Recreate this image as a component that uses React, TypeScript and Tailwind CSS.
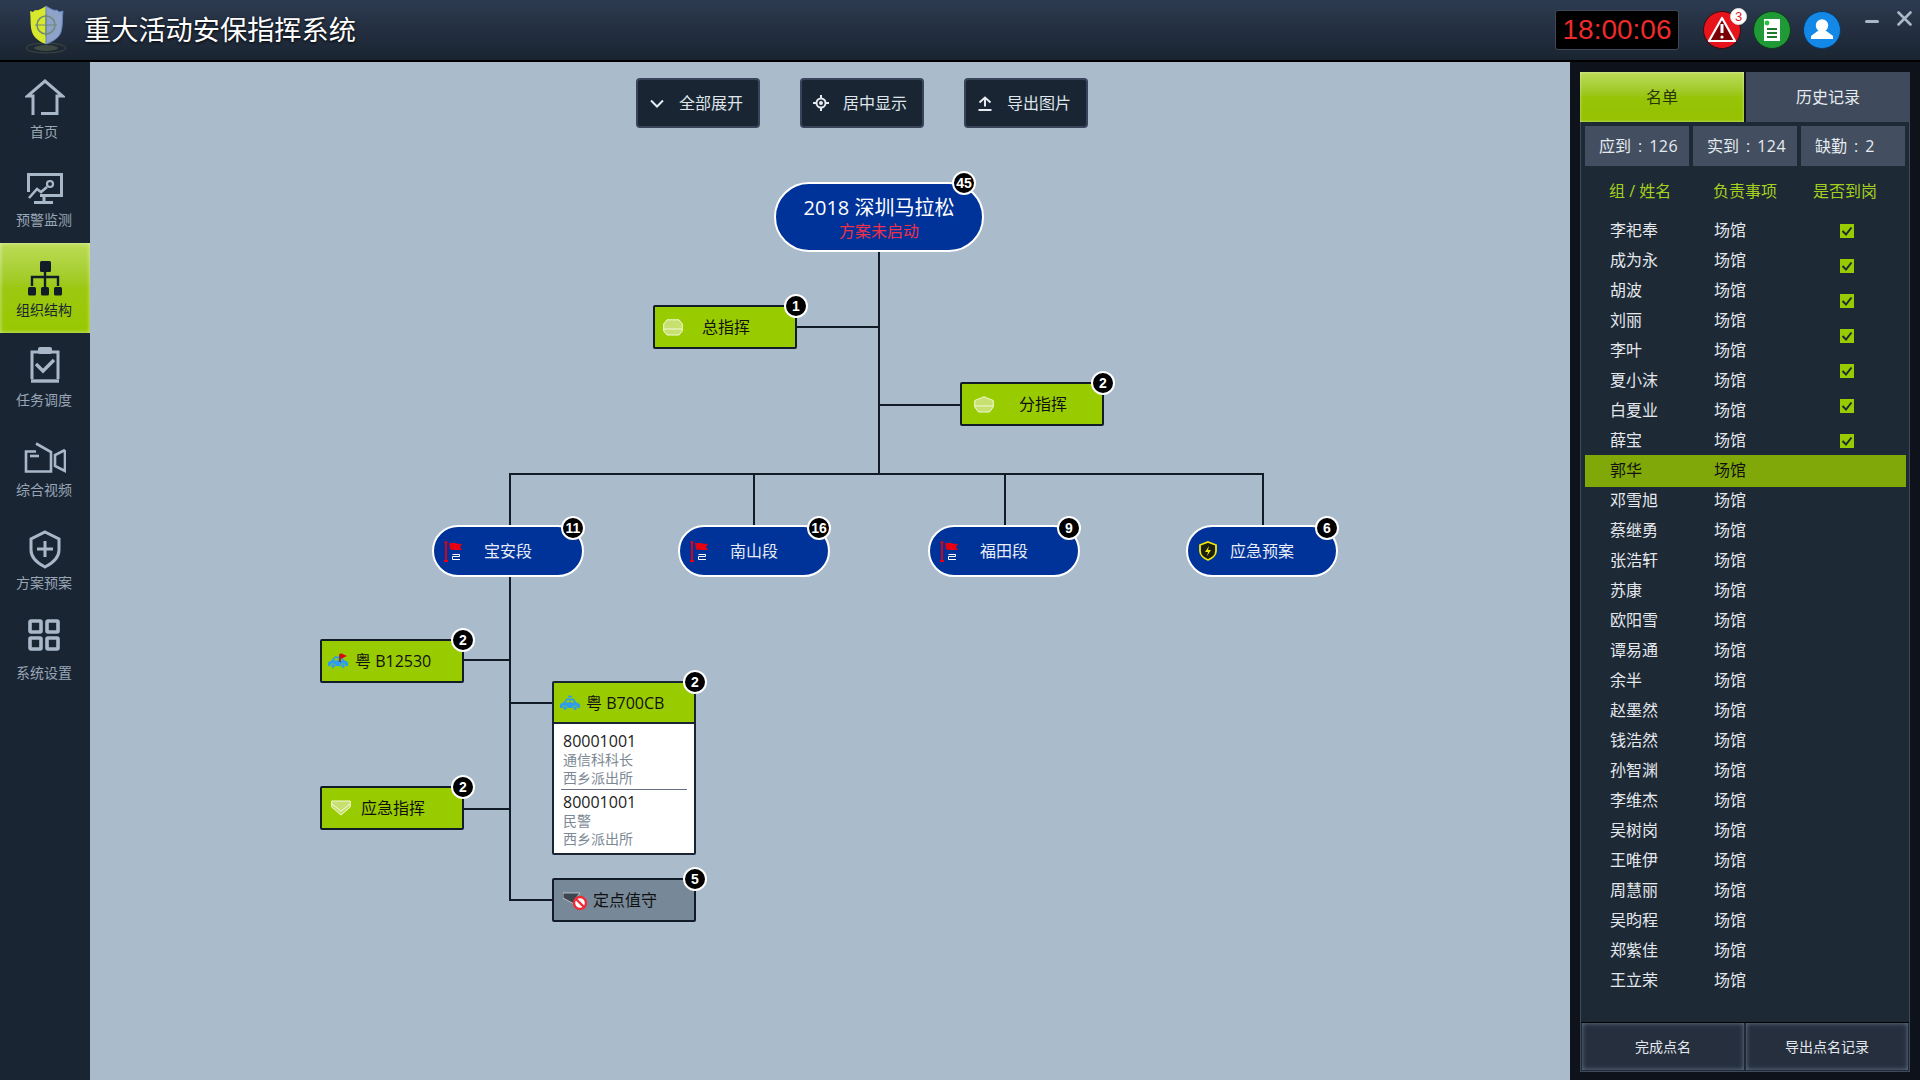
import type { ReactNode } from "react";

const NAMES = [
  "李祀奉", "成为永", "胡波", "刘丽", "李叶", "夏小沫", "白夏业", "薛宝", "郭华", "邓雪旭",
  "蔡继勇", "张浩轩", "苏康", "欧阳雪", "谭易通", "余半", "赵墨然", "钱浩然", "孙智渊", "李维杰",
  "吴树岗", "王唯伊", "周慧丽", "吴昀程", "郑紫佳", "王立荣",
];

function Logo() {
  return (
    <svg width="46" height="50" viewBox="0 0 46 50" className="ml-[25px] shrink-0">
      <ellipse cx="21" cy="43" rx="20" ry="5" fill="none" stroke="#3d4a3c" strokeWidth="1" />
      <ellipse cx="21" cy="43" rx="12" ry="3" fill="#3f4a42" />
      <path d="M21 1 C16 4 13 6 10 5 L8 7 L5 6 C6 14 5 20 7 27 C9 33 15 37 21 39 Z" fill="#d8e82c" />
      <path d="M21 1 C26 4 29 6 32 5 L34 7 L38 6 C37 14 38 20 36 27 C34 33 27 37 21 39 Z" fill="#8fa3c9" stroke="#5f7fc0" strokeWidth="1" />
      <circle cx="21" cy="20" r="9" fill="none" stroke="#6f8a7a" strokeWidth="1.5" />
      <path d="M10 20 H32 M21 9 V31" stroke="#6f8a7a" strokeWidth="1.2" />
    </svg>
  );
}

function Header() {
  return (
    <header className="flex h-[62px] shrink-0 items-center border-b-2 border-black bg-gradient-to-b from-[#2d3b51] to-[#1a2431]">
      <Logo />
      <h1 className="ml-[13px] text-[27.2px] leading-none text-white [text-shadow:0_1px_3px_#000]">重大活动安保指挥系统</h1>
      <div className="flex-1" />
      <div className="flex h-[40px] w-[124px] items-center justify-center rounded-[3px] border border-[#3d4859] bg-black font-['Liberation_Sans',sans-serif] text-[28px] text-[#ee2b2b]">
        18:00:06
      </div>
      <div className="ml-[24px] flex items-center gap-[12px]">
        <div className="relative h-[38px] w-[38px]">
          <svg viewBox="0 0 38 38" className="h-full w-full">
            <circle cx="19" cy="19" r="18.5" fill="#e8141c" stroke="#3a0d10" strokeWidth="1" />
            <path d="M19 7 L32 30 H6 Z" fill="#7a0008" stroke="#fff" strokeWidth="2.2" strokeLinejoin="round" />
            <path d="M19 13 V22" stroke="#fff" strokeWidth="3" />
            <circle cx="19" cy="26" r="1.6" fill="#fff" />
          </svg>
          <span className="absolute -top-[3px] left-[27px] flex h-[17px] w-[17px] items-center justify-center rounded-full border border-[#ddd] bg-white font-['Liberation_Sans',sans-serif] text-[13px] leading-none text-[#e8141c]">
            3
          </span>
        </div>
        <svg viewBox="0 0 38 38" className="h-[38px] w-[38px]">
          <circle cx="19" cy="19" r="18.5" fill="#1f9a36" stroke="#0c3d18" strokeWidth="1" />
          <path d="M11 8 H27 V30 H11 Z" fill="#fff" />
          <circle cx="14" cy="12" r="2.4" fill="#22c63e" />
          <path d="M14 18 H24 M14 22 H24 M14 26 H24" stroke="#1b7a2e" strokeWidth="2" />
        </svg>
        <svg viewBox="0 0 38 38" className="h-[38px] w-[38px]">
          <circle cx="19" cy="19" r="18.5" fill="#1488e6" stroke="#0b3a66" strokeWidth="1" />
          <circle cx="19" cy="14.5" r="6.2" fill="#fff" />
          <path d="M16 19 L8 25 V28 H30 V25 L22 19 Z" fill="#fff" />
        </svg>
      </div>
      <div className="ml-[24px] mb-[18px] h-[3px] w-[14px] rounded-full bg-[#a9b8c9]" />
      <svg viewBox="0 0 15 15" className="ml-[18px] mr-[8px] mb-[24px] h-[15px] w-[15px]" stroke="#a9b8c9" strokeWidth="2.6" strokeLinecap="round">
        <path d="M1.5 1.5 L13.5 13.5 M13.5 1.5 L1.5 13.5" />
      </svg>
    </header>
  );
}

function NavItem(props: { label: string; icon: ReactNode; className: string; labelClass: string; active?: boolean }) {
  return (
    <div
      className={
        props.active
          ? `flex h-[90px] flex-col items-center bg-gradient-to-b from-[#bcdc55] via-[#9cc810] to-[#98c800] text-[#1a2533] shadow-[inset_0_0_4px_rgba(255,255,255,0.6)] ${props.className}`
          : `flex h-[90px] flex-col items-center text-[#98a6b6] ${props.className}`
      }
    >
      {props.icon}
      <span className={`mr-[2px] h-[20px] text-[14px] leading-[20px] ${props.labelClass}`}>{props.label}</span>
    </div>
  );
}

function Sidebar() {
  const s = { fill: "none", stroke: "#a9b8c9", strokeWidth: 3 };
  return (
    <nav className="w-[90px] shrink-0 bg-[#1a2533] pt-px">
      <NavItem
        label="首页"
        className="pt-[16px]"
        labelClass="mt-[7px]"
        icon={
          <svg width="40" height="36" viewBox="0 0 40 36" {...s}>
            <path d="M8 36 V17 H2.5 L20 2 L37.5 17 H32 V34.5 H16" />
          </svg>
        }
      />
      <NavItem
        label="预警监测"
        className="pt-[20px]"
        labelClass="mt-[6px]"
        icon={
          <svg width="36" height="31" viewBox="0 0 36 31" {...s}>
            <path d="M1.5 19 V1.5 H34.5 V22.5 H13" />
            <path d="M2 25 L10 16 L14 19 L20 14" strokeWidth="2.6" />
            <circle cx="23" cy="11" r="3" strokeWidth="2.2" />
            <path d="M17 22 V29.5 M7 29.5 H26" />
          </svg>
        }
      />
      <NavItem
        active
        label="组织结构"
        className="pt-[18px]"
        labelClass="mt-[4px]"
        icon={
          <svg width="34" height="35" viewBox="0 0 34 35" fill="#111c28">
            <rect x="12" y="0" width="11" height="11" rx="1.5" />
            <rect x="0" y="26" width="8" height="8.5" rx="1.5" />
            <rect x="13" y="26" width="8" height="8.5" rx="1.5" />
            <rect x="26" y="26" width="8" height="8.5" rx="1.5" />
            <path d="M17 11 V26 M4 25 V16 H30 V25" fill="none" stroke="#111c28" strokeWidth="2.4" />
          </svg>
        }
      />
      <NavItem
        label="任务调度"
        className="pt-[13px]"
        labelClass="mt-[7px]"
        icon={
          <svg width="30" height="37" viewBox="0 0 30 37" {...s}>
            <path d="M28 33 V6 H2 V33" />
            <path d="M1 35 H29" strokeWidth="3.4" />
            <rect x="9" y="2" width="12" height="5" rx="1" fill="#a9b8c9" strokeWidth="2" />
            <path d="M6 18 L13 25 L24 14" strokeWidth="3.4" />
          </svg>
        }
      />
      <NavItem
        label="综合视频"
        className="pt-[19px]"
        labelClass="mt-[7px]"
        icon={
          <svg width="42" height="31" viewBox="0 0 42 31" {...s} strokeWidth="2.6">
            <path d="M12 9.5 H2 V29.5 H27 V10 L12 1.5" />
            <path d="M6 14 H15" />
            <path d="M41 8 L31 13 V24 L41 29 V8" />
          </svg>
        }
      />
      <NavItem
        label="方案预案"
        className="pt-[17px]"
        labelClass="mt-[4px]"
        icon={
          <svg width="32" height="39" viewBox="0 0 32 39" {...s}>
            <path d="M16 2 L30 9 V20 C30 28 22 34 16 37 C10 34 2 28 2 20 V9 Z" />
            <path d="M16 11 V27 M8 19 H24" />
          </svg>
        }
      />
      <NavItem
        label="系统设置"
        className="pt-[16px]"
        labelClass="mt-[12px]"
        icon={
          <svg width="32" height="32" viewBox="0 0 32 32" {...s} strokeWidth="3.6" className="mr-[2px]">
            <rect x="2" y="2" width="11" height="11" rx="1" />
            <rect x="19" y="2" width="11" height="11" rx="1" />
            <rect x="2" y="19" width="11" height="11" rx="1" />
            <rect x="19" y="19" width="11" height="11" rx="1" />
          </svg>
        }
      />
    </nav>
  );
}

function ToolButton({ icon, label }: { icon: ReactNode; label: string }) {
  return (
    <button className="flex h-[50px] w-[124px] items-center rounded-[4px] border-2 border-[#38445a] bg-[#1a2533] text-[16px] text-[#dfe5ea]">
      <span className="flex w-[41px] justify-center pr-[3px]">{icon}</span>
      {label}
    </button>
  );
}

function Badge({ n, className }: { n: number; className: string }) {
  return (
    <span className={`absolute flex h-[24px] w-[24px] items-center justify-center rounded-full border-2 border-white bg-black font-['Liberation_Sans',sans-serif] text-[14px] font-bold leading-none text-white ${className}`}>
      {n}
    </span>
  );
}

function Flag() {
  return (
    <svg width="19" height="21" viewBox="0 0 19 21" className="shrink-0">
      <path d="M2 1 V19 M0 20 H4" stroke="#e60012" strokeWidth="1.8" />
      <circle cx="2" cy="1.5" r="1.4" fill="#e60012" />
      <path d="M5 1.5 C8 3 11 1 12 2.5 L18 3 L16 6 L18 9 L12 9 C10 8 8 10 6 8 Z" fill="#e60012" />
      <path d="M8.5 13.5 H15.5 V15.5 H8.5 V18.5 H16" fill="none" stroke="#fff" strokeWidth="1" />
    </svg>
  );
}

function Pill({ className, icon, iconBox, label, n }: { className: string; icon: ReactNode; iconBox: string; label: string; n: number }) {
  return (
    <div className={`absolute flex h-[52px] w-[152px] items-center rounded-[26px] border-2 border-white bg-[#003399] pl-[10px] text-[16px] text-[#e8edf6] ${className}`}>
      <span className={`flex ${iconBox}`}>{icon}</span>
      {label}
      <Badge n={n} className="-right-[3px] -top-[11px]" />
    </div>
  );
}

function Box({ className, children, n }: { className: string; children: ReactNode; n: number }) {
  return (
    <div className={`absolute flex h-[44px] w-[144px] items-center rounded-[2px] border-2 border-[#111c28] bg-[#99cc00] text-[16px] text-[#111] ${className}`}>
      {children}
      <Badge n={n} className="-right-[13px] -top-[13px]" />
    </div>
  );
}

function Gem({ five }: { five?: boolean }) {
  return (
    <svg width="20" height="17" viewBox="0 0 20 17" fill="#c8e070" stroke="#f2f8d8" strokeWidth="1">
      {five ? <path d="M10 .8 L19.3 4.5 V11 L15.5 16 H4.5 L.7 11 V4.5 Z" /> : <path d="M4 .8 H16 L19.3 5 V12 L16 16 H4 L.7 12 V5 Z" />}
      <path d="M1 10 H19" fill="none" />
    </svg>
  );
}

function Car({ flag }: { flag?: boolean }) {
  return (
    <svg width="20" height="16" viewBox="0 0 20 16" className="shrink-0">
      <path d="M0 10 C0 8.5 2 8 3.5 7.5 L6.5 3.5 H13.5 L16.5 7.5 C18 8 20 8.5 20 10 V13 H0 Z" fill="#2b9cf2" />
      <path d="M5.5 7.5 L7.5 5 H9.5 V7.5 Z M10.5 5 H12.5 L14.5 7.5 H10.5 Z" fill="#99cc00" />
      <circle cx="5" cy="13" r="2.2" fill="#2b9cf2" stroke="#99cc00" strokeWidth=".8" />
      <circle cx="15" cy="13" r="2.2" fill="#2b9cf2" stroke="#99cc00" strokeWidth=".8" />
      {flag ? (
        <>
          <path d="M12 1 V9" stroke="#7a1010" strokeWidth="1.4" />
          <path d="M12.5 0 L19 3 L12.5 6 Z" fill="#e60012" />
        </>
      ) : (
        <path d="M8 1.5 H12" stroke="#2b9cf2" strokeWidth="1.6" />
      )}
    </svg>
  );
}

function PersonLines({ role }: { role: string }) {
  return (
    <div>
      <div className="h-[20px] text-[16px] leading-[20px] text-[#222]">80001001</div>
      <div className="h-[18px] text-[14px] leading-[18px] text-[#7c8894]">{role}</div>
      <div className="h-[18px] text-[14px] leading-[18px] text-[#7c8894]">西乡派出所</div>
    </div>
  );
}

function Canvas() {
  return (
    <main className="relative flex-1 bg-[#aabbcc]">
      <div className="flex gap-[40px] pl-[546px] pt-[16px]">
        <ToolButton
          label="全部展开"
          icon={
            <svg width="14" height="9" viewBox="0 0 14 9" fill="none" stroke="#e6ebf0" strokeWidth="2">
              <path d="M1 1.5 L7 7.5 L13 1.5" />
            </svg>
          }
        />
        <ToolButton
          label="居中显示"
          icon={
            <svg width="16" height="16" viewBox="0 0 16 16" fill="none" stroke="#e6ebf0" strokeWidth="2">
              <circle cx="8" cy="8" r="4.5" />
              <circle cx="8" cy="8" r="1" fill="#e6ebf0" />
              <path d="M8 0 V3 M8 13 V16 M0 8 H3 M13 8 H16" />
            </svg>
          }
        />
        <ToolButton
          label="导出图片"
          icon={
            <svg width="14" height="15" viewBox="0 0 14 15" fill="none" stroke="#e6ebf0" strokeWidth="2">
              <path d="M1.5 6.5 L7 1.5 L12.5 6.5 M7 2 V10.5 M0.5 14 H13.5" />
            </svg>
          }
        />
      </div>

      {/* connectors of the tree, page coords minus (90, 62) */}
      <svg className="absolute inset-0 h-full w-full" fill="none" stroke="#111c28" strokeWidth="2">
        <path d="M789 190 V412 M617 265 H789 M789 343 H870" />
        <path d="M420 463 V412 H1173 V463 M664 412 V463 M915 412 V463" />
        <path d="M420 515 V838 H462 M374 598 H420 M420 641 H462 M374 747 H420" />
      </svg>

      <div className="absolute left-[684px] top-[120px] flex h-[70px] w-[210px] flex-col items-center justify-center rounded-[35px] border-2 border-white bg-[#003399] pt-[2px] text-white">
        <div className="text-[20px] leading-[26px]">2018 深圳马拉松</div>
        <div className="text-[16px] leading-[20px] text-[#f0304a]">方案未启动</div>
        <Badge n={45} className="right-[6px] -top-[13px]" />
      </div>

      <Box className="left-[563px] top-[243px] pl-[8px]" n={1}>
        <Gem />
        <span className="ml-[19px]">总指挥</span>
      </Box>
      <Box className="left-[870px] top-[320px] pl-[12px]" n={2}>
        <Gem five />
        <span className="ml-[25px]">分指挥</span>
      </Box>

      <Pill className="left-[342px] top-[463px]" iconBox="w-[40px]" icon={<Flag />} label="宝安段" n={11} />
      <Pill className="left-[588px] top-[463px]" iconBox="w-[40px]" icon={<Flag />} label="南山段" n={16} />
      <Pill className="left-[838px] top-[463px]" iconBox="w-[40px]" icon={<Flag />} label="福田段" n={9} />
      <Pill
        className="left-[1096px] top-[463px]"
        iconBox="w-[32px]"
        label="应急预案"
        n={6}
        icon={
          <svg width="18" height="20" viewBox="0 0 18 20" fill="#1a1f10" stroke="#f5e60a" strokeWidth="1.8" className="ml-[1px]">
            <path d="M9 1 L17 4 V10 C17 14 13 17.5 9 19 C5 17.5 1 14 1 10 V4 Z" />
            <path d="M10 5 L6 11 H9 L8 15 L12 9 H9 Z" fill="#f5e60a" stroke="none" />
          </svg>
        }
      />

      <Box className="left-[230px] top-[577px] pl-[6px]" n={2}>
        <Car flag />
        <span className="ml-[7px]">粤 B12530</span>
      </Box>

      <div className="absolute left-[462px] top-[619px] h-[174px] w-[144px] rounded-[2px] border-2 border-[#1a2533] bg-white">
        <div className="flex h-[41px] items-center border-b-2 border-[#1a2533] bg-[#99cc00] pl-[6px] text-[16px] text-[#111]">
          <Car />
          <span className="ml-[6px]">粤 B700CB</span>
        </div>
        <div className="px-[9px] pt-[7px]">
          <PersonLines role="通信科科长" />
          <div className="-mx-[2px] my-[2px] h-px bg-[#667080]" />
          <PersonLines role="民警" />
        </div>
        <Badge n={2} className="-right-[13px] -top-[13px]" />
      </div>

      <Box className="left-[230px] top-[724px] pl-[9px]" n={2}>
        <svg width="20" height="16" viewBox="0 0 20 16" fill="#c8e070" stroke="#f2f8d8" strokeWidth="1">
          <path d="M.7 1 H19.3 V7 L10 15 L.7 7 Z" />
          <path d="M1 4 L10 11 L19 4" fill="none" />
        </svg>
        <span className="ml-[10px]">应急指挥</span>
      </Box>

      <Box className="left-[462px] top-[816px] bg-[#778899] pl-[9px]" n={5}>
        <svg width="24" height="19" viewBox="0 0 24 19" className="shrink-0">
          <path d="M0 2 H17 L13 7 V14 L0 7 Z" fill="#3c4650" stroke="#dfe4e8" strokeWidth=".7" />
          <circle cx="17" cy="12" r="6" fill="#fff" stroke="#ef2b36" strokeWidth="2.4" />
          <path d="M13 8 L21 16" stroke="#ef2b36" strokeWidth="2.4" />
        </svg>
        <span className="ml-[6px]">定点值守</span>
      </Box>
    </main>
  );
}

function Stat({ label, value }: { label: string; value: string }) {
  return (
    <div className="flex h-[40px] w-[104px] items-center bg-[#434f60] pl-[14px] text-[16px] text-[#e6ebf0]">
      {label}
      <span className="mx-[7px]">:</span>
      <span className="tracking-[0.5px]">{value}</span>
    </div>
  );
}

function RightPanel() {
  return (
    <aside className="w-[350px] shrink-0 bg-[#0e131b] px-[10px] pt-[10px]">
      <div className="flex h-[1000px] flex-col">
        <div className="flex h-[50px] shrink-0 gap-[2px] text-[16px]">
          <div className="flex w-[164px] items-center justify-center bg-gradient-to-b from-[#bcdc55] via-[#98c408] to-[#94c000] text-[#27350c] shadow-[inset_0_0_3px_rgba(255,255,255,0.6)]">
            名单
          </div>
          <div className="flex flex-1 items-center justify-center bg-[#3f4b5c] text-[#e6ebf0]">历史记录</div>
        </div>
        <div className="flex flex-1 flex-col border-x border-b border-[#3f4b5c] bg-[#1e2936] pb-px">
          <div className="mt-[4px] flex gap-[4px] pl-[4px]">
            <Stat label="应到" value="126" />
            <Stat label="实到" value="124" />
            <Stat label="缺勤" value="2" />
          </div>
          <div className="flex h-[50px] items-center pl-[28px] text-[16px] text-[#a4d11e]">
            <span className="w-[104px]">组 / 姓名</span>
            <span className="w-[100px]">负责事项</span>
            <span>是否到岗</span>
          </div>
          <div className="relative flex-1 pl-[4px] pr-[3px] text-[16px] text-[#e4e8ec]">
            {NAMES.map((name, i) =>
              i === 8 ? (
                <div key={name} className="relative -my-px flex h-[32px] items-center bg-[#80a808] pb-[2px] pl-[25px] text-[#111]">
                  <span className="w-[104px]">{name}</span>
                  <span>场馆</span>
                </div>
              ) : (
                <div key={name} className="flex h-[30px] items-center pb-[2px] pl-[25px]">
                  <span className="w-[104px]">{name}</span>
                  <span>场馆</span>
                </div>
              )
            )}
            {/* the check boxes run on a wider pitch than the rows in the original */}
            <div className="absolute left-[259px] top-0">
              {[0, 1, 2, 3, 4, 5, 6].map((i) => (
                <div key={i} className="flex h-[35px] items-start pt-[8px]">
                  <svg width="14" height="14" viewBox="0 0 14 14">
                    <rect width="14" height="14" fill="#99cc00" />
                    <path d="M2.5 7 L6 10.5 L11.5 3.5" fill="none" stroke="#1e2936" strokeWidth="2" />
                  </svg>
                </div>
              ))}
            </div>
          </div>
          <div className="flex h-[48px] gap-[2px] border-t border-black px-px text-[14px] text-[#e4e8ec]">
            <button className="flex-1 bg-[#252f3e] shadow-[inset_0_0_5px_rgba(170,185,205,0.55)]">完成点名</button>
            <button className="flex-1 bg-[#252f3e] shadow-[inset_0_0_5px_rgba(170,185,205,0.55)]">导出点名记录</button>
          </div>
        </div>
      </div>
    </aside>
  );
}

export default function App() {
  return (
    <div className="flex h-[1080px] w-[1920px] flex-col overflow-hidden font-['Open_Sans','Noto_Sans_CJK_SC',sans-serif]">
      <Header />
      <div className="flex flex-1">
        <Sidebar />
        <Canvas />
        <RightPanel />
      </div>
    </div>
  );
}
